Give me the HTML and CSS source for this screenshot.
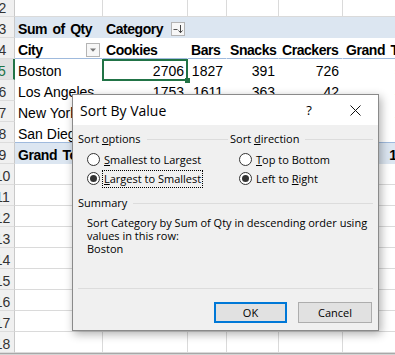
FILE: index.html
```html
<!DOCTYPE html>
<html>
<head>
<meta charset="utf-8">
<title>Sort By Value</title>
<link rel="stylesheet" href="styles.css">
</head>
<body>
<div class="sheet">
  <div class="row"><div class="h">2</div><div></div><div></div><div></div><div></div><div></div><div></div></div>
  <div class="row pv pv-top"><div class="h">3</div><div>Sum of Qty</div><div class="flexcell"><span>Category</span><span class="fbtn"><svg width="12" height="12" viewBox="0 0 12 12"><path d="M1.5 6.5h4" stroke="#555" stroke-width="1"/><path d="M8.5 2v7.5" stroke="#444" stroke-width="1"/><path d="M6.5 7.5l2 2.2 2-2.2" fill="none" stroke="#444" stroke-width="1"/></svg></span></div><div></div><div></div><div></div><div></div></div>
  <div class="row pv pv-sub"><div class="h">4</div><div class="flexcell"><span>City</span><span class="fbtn"><svg width="12" height="12" viewBox="0 0 12 12"><path d="M3 4.5h6l-3 3.2z" fill="#777"/></svg></span></div><div>Cookies</div><div>Bars</div><div>Snacks</div><div>Crackers</div><div>Grand Total</div></div>
  <div class="row pv"><div class="h hsel">5</div><div>Boston</div><div class="n sel">2706</div><div class="n">1827</div><div class="n">391</div><div class="n">726</div><div class="n">5650</div></div>
  <div class="row pv"><div class="h">6</div><div>Los Angeles</div><div class="n">1753</div><div class="n">1611</div><div class="n">363</div><div class="n">42</div><div class="n">3769</div></div>
  <div class="row pv"><div class="h">7</div><div>New York</div><div class="n">1234</div><div class="n">987</div><div class="n">410</div><div class="n">305</div><div class="n">2936</div></div>
  <div class="row pv pv-end"><div class="h">8</div><div>San Diego</div><div class="n">876</div><div class="n">654</div><div class="n">222</div><div class="n">198</div><div class="n">1950</div></div>
  <div class="row pv pv-top"><div class="h">9</div><div>Grand Total</div><div class="n">6569</div><div class="n">5079</div><div class="n">1386</div><div class="n">1271</div><div class="n">14305</div></div>
  <div class="row"><div class="h">10</div><div></div><div></div><div></div><div></div><div></div><div></div></div>
  <div class="row"><div class="h">11</div><div></div><div></div><div></div><div></div><div></div><div></div></div>
  <div class="row"><div class="h">12</div><div></div><div></div><div></div><div></div><div></div><div></div></div>
  <div class="row"><div class="h">13</div><div></div><div></div><div></div><div></div><div></div><div></div></div>
  <div class="row"><div class="h">14</div><div></div><div></div><div></div><div></div><div></div><div></div></div>
  <div class="row"><div class="h">15</div><div></div><div></div><div></div><div></div><div></div><div></div></div>
  <div class="row"><div class="h">16</div><div></div><div></div><div></div><div></div><div></div><div></div></div>
  <div class="row"><div class="h">17</div><div></div><div></div><div></div><div></div><div></div><div></div></div>
  <div class="row"><div class="h">18</div><div></div><div></div><div></div><div></div><div></div><div></div></div>
</div>
<div class="strip"></div>

<div class="dialog">
  <div class="titlebar">
    <span class="title">Sort By Value</span>
    <span class="help">?</span>
    <span class="close"><svg width="11" height="11" viewBox="0 0 11 11"><path d="M0.5 0.5l10 10M10.5 0.5l-10 10" stroke="#111" stroke-width="1"/></svg></span>
  </div>
  <div class="dbody">
    <div class="groups">
      <div class="group left">
        <div class="legend"><span>Sort <u>o</u>ptions</span><i class="rule"></i></div>
        <div class="radios">
          <div class="radio"><span class="dot"></span><span><u>S</u>mallest to Largest</span></div>
          <div class="radio on"><span class="dot"></span><span class="focus"><u>L</u>argest to Smallest</span></div>
        </div>
      </div>
      <div class="group">
        <div class="legend"><span>Sort <u>d</u>irection</span><i class="rule"></i></div>
        <div class="radios">
          <div class="radio"><span class="dot"></span><span><u>T</u>op to Bottom</span></div>
          <div class="radio on"><span class="dot"></span><span>Left to <u>R</u>ight</span></div>
        </div>
      </div>
    </div>
    <div class="legend summary-legend"><span>Summary</span><i class="rule"></i></div>
    <p class="summary">Sort Category by Sum of Qty in descending order using<br>values in this row:<br>Boston</p>
  </div>
  <div class="footer">
    <button class="btn default">OK</button>
    <button class="btn">Cancel</button>
  </div>
</div>
</body>
</html>
```

FILE: styles.css
```css
* { box-sizing: border-box; }
html, body { margin: 0; padding: 0; }
body {
  width: 395px;
  height: 355px;
  overflow: hidden;
  position: relative;
  background: #fff;
  font-family: "Liberation Sans", Arial, sans-serif;
  font-size: 14px;
  color: #000;
}

/* ---------- spreadsheet ---------- */
.sheet { margin: -4px 0 0 -9px; width: 439px; }
.row {
  display: grid;
  grid-template-columns: 24px 88px 85px 39px 52px 64px 87px;
  height: 21px;
}
.row > div {
  border-right: 1px solid #dadada;
  border-bottom: 1px solid #dadada;
  padding: 4px 3px 0;
  line-height: 16px;
  white-space: nowrap;
  overflow: hidden;
}
.row > .h {
  background: #f0f0f0;
  color: #333;
  text-align: center;
  padding: 4px 0 0;
  border-right-color: #c9c9c9;
  border-bottom-color: #dcdcdc;
}
.row > .hsel {
  background: #e1e1e1;
  color: #217346;
  border-right: 2px solid #217346;
}
.pv > div:not(.h) { border-color: transparent; }
.pv-top > div:not(.h),
.pv-sub > div:not(.h) {
  font-weight: bold;
  letter-spacing: -0.45px;
  word-spacing: 2px;
}
.pv-top > div:not(.h) { background: #dce6f1; }
.pv-sub > div:not(.h) { border-bottom-color: #9fbadd; }
.pv-end > div:not(.h) { border-bottom-color: #9fbadd; }
.row > .n { text-align: right; }
.pv-top > .n { letter-spacing: 0; }

.row > .flexcell {
  display: flex;
  justify-content: space-between;
  align-items: center;
  padding-top: 3px;
  padding-right: 2px;
}
.fbtn {
  width: 14px;
  height: 14px;
  border: 1px solid #b4b4b4;
  background: #f7f7f7;
  display: flex;
  align-items: center;
  justify-content: center;
  flex: none;
  margin-top: 1px;
}
.fbtn svg { display: block; }

.row > .sel { position: relative; overflow: visible; z-index: 1; }
.sel::after {
  content: "";
  position: absolute;
  left: -1px; top: 0; right: -1px; bottom: -2px;
  border: 2px solid #217346;
}
.sel::before {
  content: "";
  position: absolute;
  right: -3px; bottom: -4px;
  width: 5px; height: 5px;
  background: #217346;
  z-index: 2;
}
.strip { height: 4px; background: #d4d4d4; border-top: 1px solid #a8a8a8; }

/* ---------- dialog ---------- */
.dialog {
  position: absolute;
  left: 72px;
  top: 94px;
  width: 307px;
  height: 237px;
  background: #f0f0f0;
  border: 1px solid #8a8a8a;
  box-shadow: 2px 3px 9px rgba(0, 0, 0, 0.32);
  display: flex;
  flex-direction: column;
  font-family: "Open Sans", "Noto Sans", sans-serif;
  font-size: 11px;
  color: #000;
  z-index: 5;
}
.titlebar {
  height: 30px;
  background: #fff;
  display: flex;
  align-items: center;
  flex: none;
}
.title { flex: 1; padding-left: 7px; font-size: 14px; }
.help, .close {
  width: 46px;
  height: 30px;
  display: flex;
  align-items: center;
  justify-content: center;
}
.help { font-size: 13px; }
.close svg { display: block; }

.dbody { padding: 6px 5px 0; flex: 1; }
.groups { display: grid; grid-template-columns: 152px 1fr; }
.group.left { padding-right: 2px; }
.legend {
  display: flex;
  align-items: center;
  height: 16px;
  line-height: 16px;
  white-space: nowrap;
}
.rule {
  flex: 1;
  height: 1px;
  background: #dcdcdc;
  margin-left: 6px;
}
.radios { margin-top: 3px; padding-left: 9px; }
.radio {
  display: flex;
  align-items: center;
  height: 19px;
  white-space: nowrap;
}
.dot {
  width: 13px;
  height: 13px;
  border: 1px solid #333;
  border-radius: 50%;
  background: #fff;
  margin-right: 4px;
  position: relative;
  flex: none;
}
.on .dot::after {
  content: "";
  position: absolute;
  left: 2px; top: 2px;
  width: 7px; height: 7px;
  border-radius: 50%;
  background: #333;
}
.focus {
  outline: 1px dotted #000;
  padding: 0 1px;
  margin-left: -1px;
  line-height: 16px;
}
.summary-legend { margin-top: 7px; }
.summary {
  margin: 5px 0 0;
  padding-left: 9px;
  line-height: 13px;
}

.footer {
  flex: none;
  margin: 0 5px;
  border-top: 1px solid #dcdcdc;
  padding: 13px 1px 7px;
  display: flex;
  justify-content: flex-end;
  gap: 11px;
}
.btn {
  height: 21px;
  width: 74px;
  background: #e1e1e1;
  border: 1px solid #adadad;
  font-family: "Open Sans", "Noto Sans", sans-serif;
  font-size: 11px;
  color: #000;
  padding: 0;
  margin: 0;
}
.btn.default { width: 73px; border: 2px solid #0078d7; }
```
